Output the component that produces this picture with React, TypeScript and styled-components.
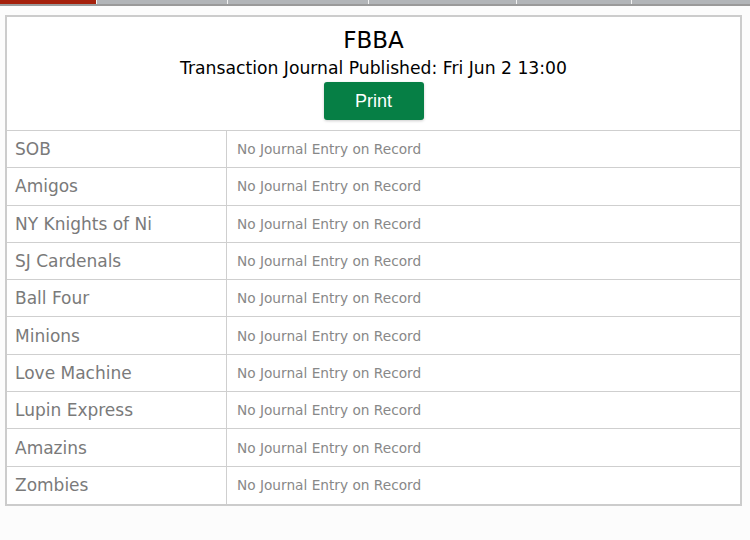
import React from "react";
import styled, { createGlobalStyle } from "styled-components";

const Global = createGlobalStyle`
  html, body { margin: 0; padding: 0; background: #fcfcfc; }
  body { font-family: "DejaVu Sans", Verdana, sans-serif; }
`;

const TabBar = styled.div`
  display: flex;
  height: 4px;
  border-bottom: 2px solid #9a9a9a;
  background: #b2b5b8;
`;

const Tab = styled.div<{ $w: number; $active?: boolean }>`
  width: ${(p) => p.$w}px;
  flex: none;
  box-sizing: border-box;
  background: ${(p) => (p.$active ? "#a5210c" : "#b2b5b8")};
  border-right: 1px solid #f2f2f2;
  &:last-child { flex: 1; border-right: none; }
`;

const Panel = styled.div`
  margin: 9px 8px 0 5px;
  border: 2px solid #cccccc;
  background: #ffffff;
`;

const Header = styled.div`
  display: flex;
  flex-direction: column;
  align-items: center;
  height: 114px;
  padding-top: 9px;
  box-sizing: border-box;
  border-bottom: 1px solid #cfcfcf;
`;

const League = styled.div`
  font-size: 23px;
  line-height: 28px;
  color: #000;
`;

const Subtitle = styled.div`
  font-size: 17.2px;
  line-height: 22px;
  color: #000;
  margin-top: 3px;
`;

const PrintButton = styled.button`
  margin-top: 3px;
  width: 100px;
  height: 38px;
  border: none;
  border-radius: 3px;
  background: #067f45;
  color: #fff;
  font-family: "Liberation Sans", Arial, sans-serif;
  font-size: 18px;
  box-shadow: 0 1px 3px rgba(0, 0, 0, 0.2);
  cursor: pointer;
`;

const Row = styled.div`
  display: grid;
  grid-template-columns: 220px 1fr;
  height: 37.3px;
  box-sizing: border-box;
  border-bottom: 1px solid #cfcfcf;
  &:last-child { border-bottom: none; }
`;

const Team = styled.div`
  display: flex;
  align-items: center;
  padding-left: 8px;
  font-size: 17px;
  color: #7a7a7a;
  border-right: 1px solid #cfcfcf;
`;

const Entry = styled.div`
  display: flex;
  align-items: center;
  padding-left: 10px;
  font-size: 13.7px;
  color: #888888;
`;

const tabs = [97, 131, 141, 148, 115, 119];
const teams = [
  "SOB",
  "Amigos",
  "NY Knights of Ni",
  "SJ Cardenals",
  "Ball Four",
  "Minions",
  "Love Machine",
  "Lupin Express",
  "Amazins",
  "Zombies",
];

export default function App() {
  return (
    <>
      <Global />
      <TabBar>
        {tabs.map((w, i) => (
          <Tab key={i} $w={w} $active={i === 0} />
        ))}
      </TabBar>
      <Panel>
        <Header>
          <League>FBBA</League>
          <Subtitle>Transaction Journal Published: Fri Jun 2 13:00</Subtitle>
          <PrintButton>Print</PrintButton>
        </Header>
        {teams.map((t) => (
          <Row key={t}>
            <Team>{t}</Team>
            <Entry>No Journal Entry on Record</Entry>
          </Row>
        ))}
      </Panel>
    </>
  );
}
